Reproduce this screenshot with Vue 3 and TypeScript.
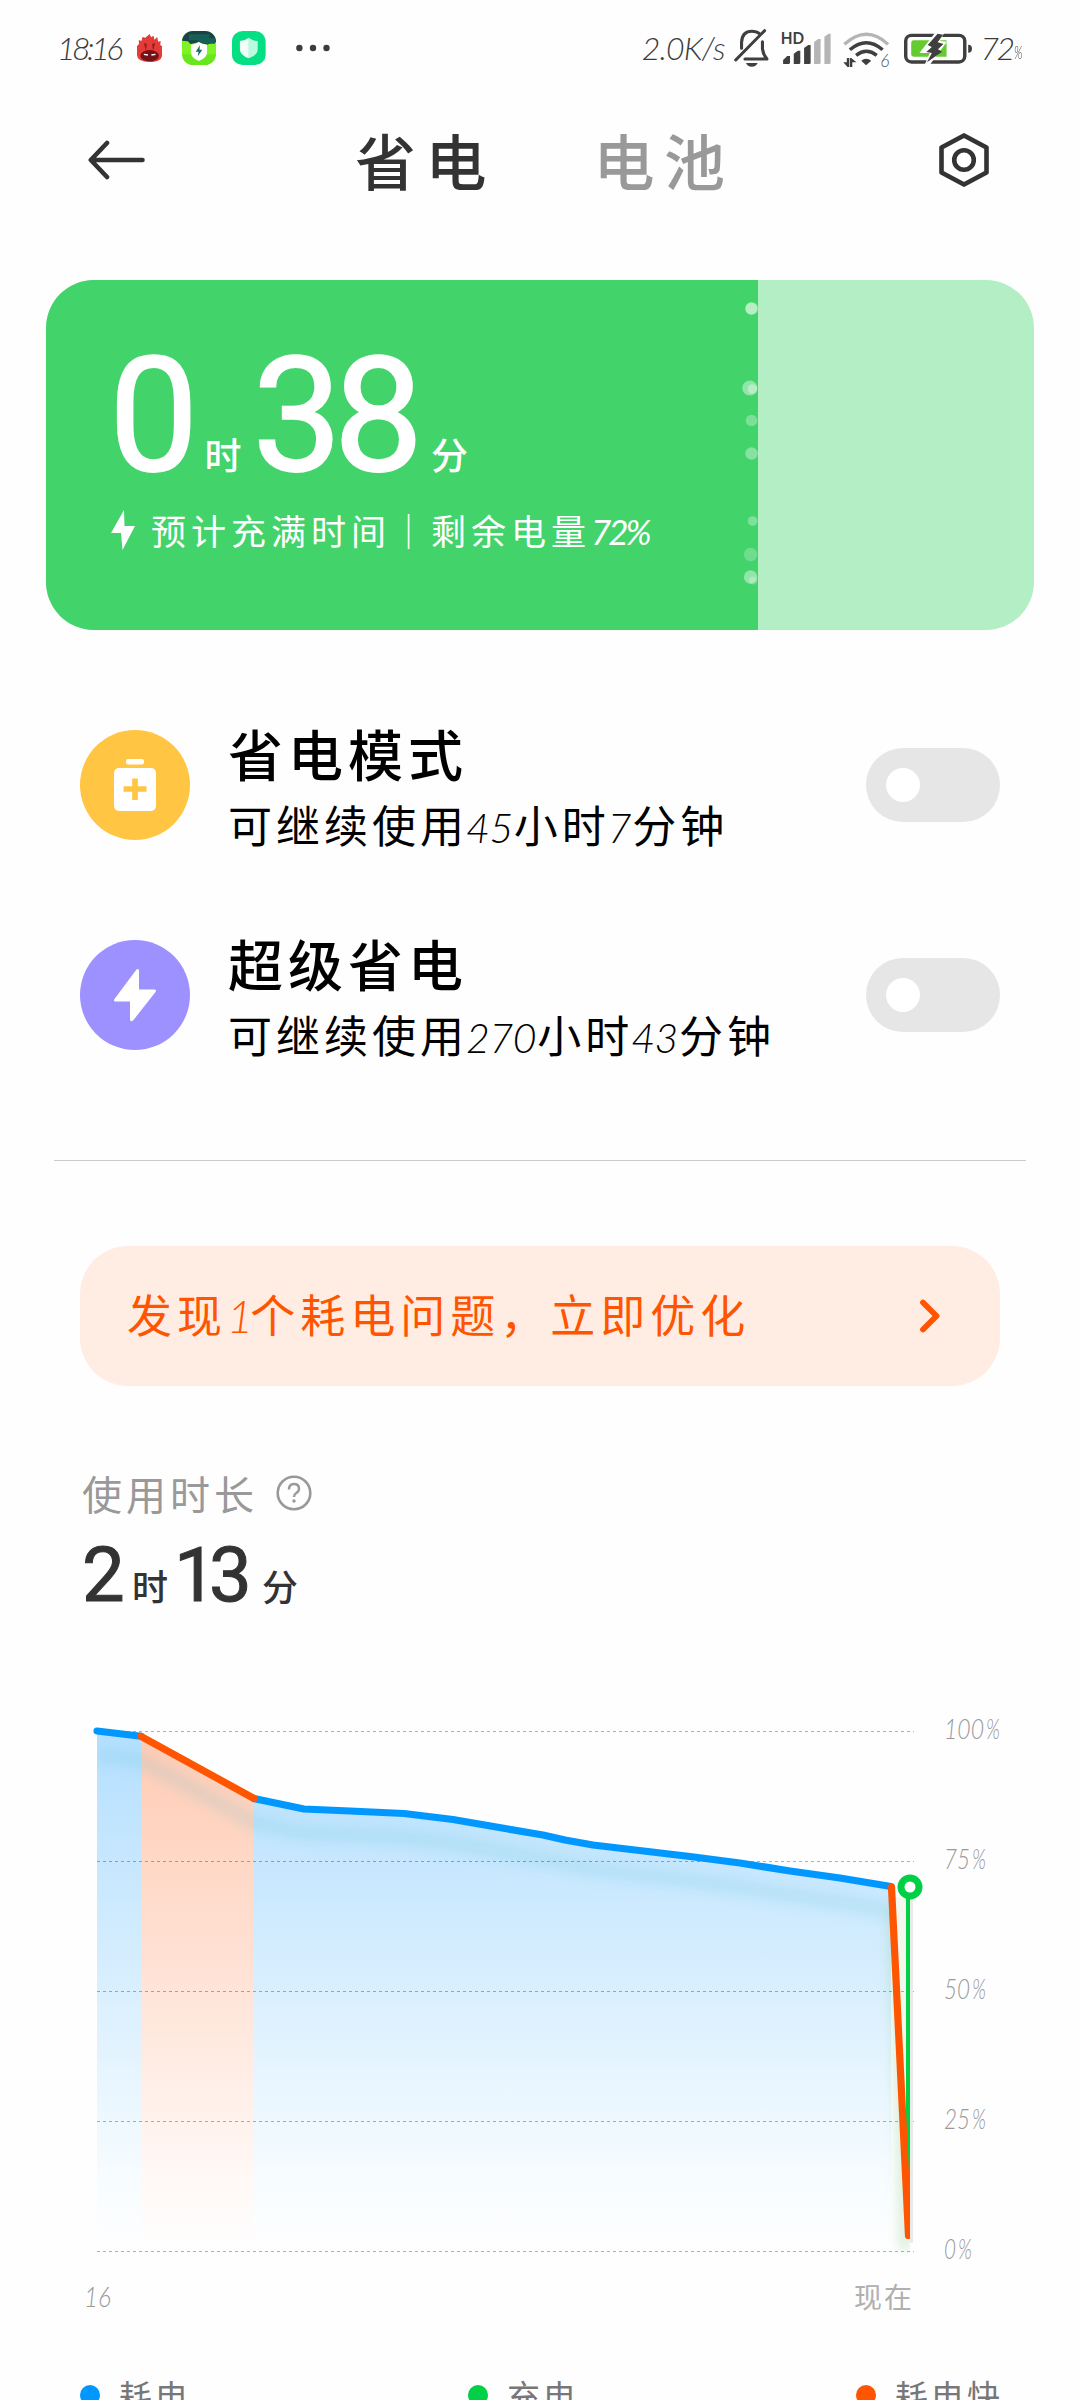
<script setup lang="ts">
interface Mode {
  id: string
  title: string
  hours: string
  minutes: string
  color: string
}

interface Point {
  x: number
  y: number
}

const modes: Mode[] = [
  { id: 'saver', title: '省电模式', hours: '45', minutes: '7', color: '#ffc543' },
  { id: 'ultra', title: '超级省电', hours: '270', minutes: '43', color: '#9d91ff' },
]

const bubbles = [
  { x: 751.5, y: 308.5, r: 6.2, o: 0.62 },
  { x: 749.8, y: 388, r: 7.6, o: 0.42 },
  { x: 752.5, y: 389, r: 4.8, o: 0.35 },
  { x: 751.5, y: 420.5, r: 5.8, o: 0.3 },
  { x: 751.5, y: 453.5, r: 6.2, o: 0.36 },
  { x: 752.6, y: 521, r: 4.8, o: 0.32 },
  { x: 750.6, y: 554.5, r: 6.7, o: 0.24 },
  { x: 750.6, y: 577, r: 6.7, o: 0.42 },
  { x: 753, y: 580.5, r: 4, o: 0.25 },
]

const gridLines = [
  { y: 1731.5, label: '100' },
  { y: 1861.5, label: '75' },
  { y: 1991.5, label: '50' },
  { y: 2121.5, label: '25' },
  { y: 2251.5, label: '0' },
]

const toPoints = (pairs: number[][]): Point[] => pairs.map(([x, y]) => ({ x, y }))
const line = (pts: Point[]): string => pts.map((p) => `${p.x},${p.y}`).join(' ')
const area = (pts: Point[]): string =>
  `${pts[0].x},2251 ${line(pts)} ${pts[pts.length - 1].x},2251`

const first = toPoints([[97, 1731], [141, 1736.3]])
const fast = toPoints([[141, 1736.3], [254, 1798.5]])
const rest = toPoints([
  [254, 1798.5], [304, 1809], [350, 1811], [404, 1813.5], [453, 1819.5], [508, 1829],
  [543, 1835], [565, 1840], [593, 1845], [690, 1856.5], [740, 1863], [790, 1871],
  [840, 1878], [891, 1886.5],
])
const drop = toPoints([[891.5, 1887], [908.5, 2235.5]])
const all = [...first, ...fast, ...rest]

const legend = [
  { text: '耗电', color: '#0098ff' },
  { text: '充电', color: '#00d046' },
  { text: '耗电快', color: '#ff5500' },
]
</script>

<template>
  <main class="page">
    <div class="status">
      <span class="num clock">18:16</span>
      <svg class="antutu" width="25" height="28" viewBox="397 107 73 84" preserveAspectRatio="none">
        <path d="M434 107l4 10 7-5 3 12 8-8 3 14 7-2-1 12 5 4v26q0 21-36 21t-37-21v-27l6-6-1-12 8 3 3-12 8 2z" fill="#e23b38" />
        <path d="M417 134l9 3-3 20zM450 134l-9 3 3 20z" fill="#9d1a1c" />
        <ellipse cx="434" cy="172" rx="27" ry="17" fill="#741217" />
        <path d="M417 168l12 2M439 170l12-2" stroke="#fff" stroke-width="4" />
      </svg>
      <svg class="app-a" width="34" height="34" viewBox="528 96 99 102" preserveAspectRatio="none">
        <defs><clipPath id="cap"><rect x="528" y="96" width="99" height="102" rx="32" /></clipPath></defs>
        <g clip-path="url(#cap)">
          <rect x="528" y="96" width="99" height="102" fill="#69e61c" />
          <path d="M528 126h99v40h-99z" fill="#7df224" />
          <path d="M528 96h99v34l-14 2-12 5-23-8-25 6-8-8-17-2z" fill="#1b4247" />
          <path d="M548 106h60v12h16v16h-42l-10-10h-24z" fill="#176058" />
        </g>
        <path d="M577 129q12 8 24 8v22q0 18-24 27q-23-9-23-27v-22q13 0 23-8z" fill="#fff" />
        <path d="M580 139l-12 19h8l-2 14 13-20h-8z" fill="#176b67" />
      </svg>
      <svg class="app-b" width="34" height="34" viewBox="674 96 99 102" preserveAspectRatio="none">
        <rect x="674" y="96" width="98" height="102" rx="31" fill="#04df84" />
        <path d="M723 116q12 10 26 10v24q0 19-26 28z" fill="#b9fbe0" />
        <path d="M723 116q-12 10-26 10v24q0 19 26 28z" fill="#f2fff9" />
      </svg>
      <svg class="dots" width="34" height="8" viewBox="0 0 34 8">
        <circle v-for="cx in [3.4, 17, 30.5]" :key="cx" :cx="cx" cy="4" r="3.2" fill="#3c3c3c" />
      </svg>
      <span class="num speed">2.0K/s</span>
      <svg class="bell" width="36" height="38" viewBox="565 92 105 114" preserveAspectRatio="none">
        <g fill="none" stroke="#3f3f3f" stroke-linecap="round" stroke-linejoin="round">
          <path d="M587 150v-18q2-33 30-33q14 0 22 7" stroke-width="9" />
          <path d="M648 130v22q2 16 13 30h-64" stroke-width="9" />
          <path d="M570 185l84-88" stroke-width="9" />
        </g>
        <path d="M600 194h34q-4 11-17 11t-17-11z" fill="#3f3f3f" />
      </svg>
      <svg class="signal" width="50.6" height="34" viewBox="698 96 147 102" preserveAspectRatio="none">
        <text class="hd" x="700" y="135" textLength="68" lengthAdjust="spacingAndGlyphs">HD</text>
        <g fill="#3f3f3f">
          <path d="M707 195v-12l12-12h8v20q0 4-4 4z" />
          <path d="M738 195v-31l12-9h7v36q0 4-4 4z" />
          <path d="M768 195v-48l12-9h7v53q0 4-4 4z" />
        </g>
        <g fill="#b5b5b5">
          <path d="M797 195v-66l12-9h7v71q0 4-4 4z" />
          <path d="M827 195v-82l12-9h6v87q0 4-4 4z" />
        </g>
      </svg>
      <svg class="wifi" width="47.5" height="37" viewBox="882 94 138 111" preserveAspectRatio="none">
        <g fill="none" stroke-width="10">
          <path d="M886 134q64-60 127 0" stroke="#b5b5b5" />
          <path d="M902 150q48-42 95 0" stroke="#3f3f3f" />
          <path d="M920 167q30-24 60 0" stroke="#3f3f3f" />
        </g>
        <path d="M949 197l-14-14q14-12 29 0z" fill="#3f3f3f" />
        <g fill="#3f3f3f">
          <path d="M893 175h7v27h-5l-12-14h10zM909 202h-7v-27h4l15 13h-12z" />
        </g>
        <text class="six" x="990" y="201">6</text>
      </svg>
      <svg class="battery" width="69" height="33" viewBox="1059 97 201 99" preserveAspectRatio="none">
        <rect x="1064" y="107" width="172" height="80" rx="17" fill="#fff" stroke="#3f3f3f" stroke-width="10" />
        <path d="M1087 122h96v49h-96q-7 0-7-7v-35q0-7 7-7z" fill="#64cb30" />
        <path d="M1152 96l25 2-13 26 20 2-52 72-14 0 16-38h-30z" fill="#fff" />
        <path d="M1157 102l16 3-16 23 17 5-16 16 12 7-44 32 14-28-16-3 16-15-12-6z" fill="#3f3f3f" />
        <path d="M1246 135q11 0 11 12t-11 12z" fill="#3f3f3f" />
      </svg>
      <span class="num level">72</span><span class="num pct-s">%</span>
    </div>

    <header class="bar">
      <svg class="back" width="57" height="40" viewBox="0 0 57 40">
        <path d="M19 3L2.800 20 19 37M3 20h51.500" fill="none" stroke="#333" stroke-width="4.600" stroke-linecap="round" stroke-linejoin="round" />
      </svg>
      <span class="tab tab-on">省电</span>
      <span class="tab tab-off">电池</span>
      <svg class="gear" width="50" height="54" viewBox="0 0 50 54">
        <path d="M25 2.400L47.500 14.600v24.800L25 51.600 2.500 39.400V14.600z" fill="none" stroke="#333" stroke-width="4.600" stroke-linejoin="round" />
        <circle cx="25" cy="27" r="9.800" fill="none" stroke="#333" stroke-width="4.600" />
      </svg>
    </header>

    <section class="card">
      <div class="fill"></div>
      <svg class="bubbles" width="988" height="350" viewBox="46 280 988 350">
        <circle v-for="(b, i) in bubbles" :key="i" :cx="b.x" :cy="b.y" :r="b.r" fill="#fff" :fill-opacity="b.o" />
      </svg>
      <div class="card-body">
        <div class="time big">
          <span class="d">0</span><span class="u u1">时</span><span class="d d2">38</span><span class="u u2">分</span>
        </div>
        <div class="card-note">
          <svg class="bolt" width="25" height="40" viewBox="0 0 25 40">
            <path d="M13 0L0 23h10l1.500 17L24 16H13.500z" fill="#fff" />
          </svg>
          <span>预计充满时间｜剩余电量<span class="num">72%</span></span>
        </div>
      </div>
    </section>

    <section class="modes">
      <div v-for="m in modes" :key="m.id" class="mode">
        <span class="disc" :style="{ background: m.color }">
          <svg v-if="m.id === 'saver'" width="42" height="52" viewBox="0 0 42 52">
            <rect x="12" y="0" width="18" height="5.400" rx="2" fill="#fff" />
            <rect x="0" y="9" width="42" height="43" rx="5" fill="#fff" />
            <path d="M21 19.500v21.500M9.500 30h23" stroke="#ffc543" stroke-width="5.600" />
          </svg>
          <svg v-else width="44" height="54" viewBox="0 0 44 54">
            <path d="M23.500 1.500Q26 0 26 3v18.500h15q3 0 1.500 2.500L20.500 52Q17 55 17 51V33.500H2.500Q0 33.500 1.500 31z" fill="#fff" />
          </svg>
        </span>
        <div class="mode-text">
          <div class="mode-title">{{ m.title }}</div>
          <div class="mode-sub">可继续使用<span class="num">{{ m.hours }}</span>小时<span class="num">{{ m.minutes }}</span>分钟</div>
        </div>
        <span class="toggle"><i></i></span>
      </div>
    </section>

    <hr class="rule" />

    <section class="banner">
      <span>发现<span class="num">1</span>个耗电问题，立即优化</span>
      <svg width="20" height="34" viewBox="0 0 20 34">
        <path d="M3 3.500L16.500 17 3 30.500" fill="none" stroke="#ff5500" stroke-width="5.800" stroke-linecap="round" stroke-linejoin="round" />
      </svg>
    </section>

    <section class="usage">
      <div class="usage-label">
        <span>使用时长</span>
        <svg width="36" height="36" viewBox="0 0 36 36">
          <circle cx="18" cy="18" r="16.300" fill="none" stroke="#999" stroke-width="2.600" />
          <path d="M13 14.500q0-5.500 5-5.500t5 4.700q0 2.600-2.700 4.300-2.300 1.500-2.300 4" fill="none" stroke="#999" stroke-width="2.400" />
          <circle cx="18" cy="26" r="1.700" fill="#999" />
        </svg>
      </div>
      <div class="time small">
        <span class="d">2</span><span class="u u1">时</span><span class="d d2">13</span><span class="u u2">分</span>
      </div>
    </section>

    <svg class="chart" width="1080" height="640" viewBox="0 1690 1080 640">
      <defs>
        <linearGradient id="blue" gradientUnits="userSpaceOnUse" x1="0" y1="1731" x2="0" y2="2245">
          <stop offset="0" stop-color="#b4dffe" />
          <stop offset="0.500" stop-color="#d9effe" />
          <stop offset="0.900" stop-color="#f9fdff" />
          <stop offset="1" stop-color="#fefefe" />
        </linearGradient>
        <linearGradient id="orange" gradientUnits="userSpaceOnUse" x1="0" y1="1731" x2="0" y2="2245">
          <stop offset="0" stop-color="#ffcbb4" />
          <stop offset="0.500" stop-color="#ffe4d8" />
          <stop offset="0.900" stop-color="#fffaf8" />
          <stop offset="1" stop-color="#fefefe" />
        </linearGradient>
        <filter id="soft" x="-10%" y="-30%" width="120%" height="160%"><feGaussianBlur stdDeviation="6" /></filter>
        <filter id="softv" filterUnits="userSpaceOnUse" x="860" y="1870" width="60" height="420"><feGaussianBlur stdDeviation="5" /></filter>
        <clipPath id="plot"><rect x="90" y="1700" width="820" height="590" /></clipPath>
        <clipPath id="under"><polygon :points="area(all)" /></clipPath>
      </defs>
      <polygon :points="area(first)" fill="url(#blue)" />
      <polygon :points="area(fast)" fill="url(#orange)" />
      <polygon :points="area(rest)" fill="url(#blue)" />
      <g clip-path="url(#under)">
        <polyline :points="line(all)" transform="translate(0 24)" fill="none" stroke="#46b4c8" stroke-opacity="0.150" stroke-width="15" filter="url(#soft)" />
      </g>
      <g clip-path="url(#plot)">
        <path d="M893 1905L905 2250" fill="none" stroke="#7cc98a" stroke-opacity="0.240" stroke-width="14" filter="url(#softv)" />
        <path d="M891 1895L908 2235V1900z" fill="#f3f7ec" />
      </g>
      <rect x="910" y="1898" width="3" height="345" fill="#e9ebe9" />
      <g v-for="g in gridLines" :key="g.label">
        <line x1="97" x2="914" :y1="g.y" :y2="g.y" stroke="#000" stroke-opacity="0.310" stroke-width="1" stroke-dasharray="3 3" />
        <text class="axis" x="944" :y="g.y + 7.500" :textLength="g.label.length * 14 - 2" lengthAdjust="spacingAndGlyphs">{{ g.label }}</text>
        <text class="axis" :x="944 + g.label.length * 14" :y="g.y + 7.500" textLength="14" lengthAdjust="spacingAndGlyphs">%</text>
      </g>
      <polyline :points="line(first)" class="curve" stroke="#0098ff" />
      <polyline :points="line(rest)" class="curve" stroke="#0098ff" />
      <polyline :points="line(fast)" class="curve" stroke="#ff5500" />
      <g clip-path="url(#plot)">
        <path d="M908 1890V2190" stroke="#00d046" stroke-width="4" />
        <polyline :points="line(drop)" class="curve" stroke="#ff5500" />
      </g>
      <circle cx="910" cy="1887" r="9" fill="#fff" stroke="#00d046" stroke-width="7" />
      <text class="axis" x="84" y="2307" textLength="27" lengthAdjust="spacingAndGlyphs">16</text>
      <text class="now" x="854" y="2308">现在</text>
    </svg>

    <footer class="legend">
      <span v-for="l in legend" :key="l.text" class="key">
        <i :style="{ background: l.color }"></i>{{ l.text }}
      </span>
    </footer>
  </main>
</template>

<style>
body {
  margin: 0;
  background: #fefefe;
}
</style>

<style scoped>
.page {
  width: 1080px;
  height: 2400px;
  overflow: hidden;
  background: #fefefe;
  font-family: 'Noto Sans CJK SC', sans-serif;
  color: #333;
}
svg {
  display: block;
  flex: none;
}
.num {
  font-family: Lato, 'Liberation Sans', sans-serif;
  font-weight: 300;
  font-style: italic;
  line-height: 0;
}

.status {
  display: flex;
  align-items: center;
  height: 96px;
  padding-left: 57px;
  white-space: nowrap;
}
.status svg { overflow: visible; }
.status .num {
  flex: none;
  font-size: 32px;
  line-height: 40px;
  color: #3c3c3c;
}
.status .clock { width: 79.7px; letter-spacing: -3.5px; }
.app-a { margin-left: 20px; }
.app-b { margin-left: 16px; }
.dots { margin-left: 30px; }
.status .speed { width: 92px; margin-left: 312px; letter-spacing: -0.8px; }
.bell { margin-left: 0.6px; }
.signal { margin-left: 10px; }
.hd { font: 700 49px Lato, sans-serif; fill: #3f3f3f; }
.wifi { margin-left: 12.5px; margin-top: 3px; }
.six { font: italic 300 50px Lato, sans-serif; fill: #555; }
.battery { margin-left: 13.5px; }
.status .level { width: 34px; margin-left: 7px; letter-spacing: -2.5px; }
.status .pct-s { font-size: 18px; margin-top: 7px; transform: scaleX(0.65); transform-origin: 0 50%; }

.bar {
  display: flex;
  align-items: center;
  height: 128px;
  padding-left: 88px;
}
.tab {
  flex: none;
  width: 141px;
  text-indent: 4px;
  font-size: 61px;
  letter-spacing: 9.5px;
  line-height: 122px;
  font-weight: 500;
  white-space: nowrap;
}
.tab-on { margin-left: 206px; }
.tab-off { margin-left: 97.5px; color: #999; }
.gear { margin-left: 208.5px; }

.card {
  position: relative;
  height: 350px;
  margin: 56px 46px 0;
  border-radius: 48px;
  overflow: hidden;
  background: #b3eec5;
  color: #fff;
}
.fill {
  position: absolute;
  inset: 0 auto 0 0;
  width: 711.5px;
  background: #42d36a;
}
.bubbles {
  position: absolute;
  inset: 0;
}
.card-body {
  position: relative;
  padding: 62px 0 0 65px;
}
.time {
  display: flex;
  align-items: baseline;
  white-space: nowrap;
}
.d {
  font-family: Roboto, sans-serif;
  font-weight: 400;
}
.u {
  font-weight: 500;
}
.big { height: 148px; line-height: 148px; }
.big .d { font-size: 159px; letter-spacing: -8px; margin-left: -2px; -webkit-text-stroke: 2px #fff; }
.big .u { font-size: 37px; }
.big .u1 { margin-left: 14px; }
.big .d.d2 { margin-left: 11px; }
.big .u2 { margin-left: 16px; }
.card-note {
  display: flex;
  align-items: center;
  height: 44px;
  margin-top: 18px;
  font-size: 35px;
  letter-spacing: 5px;
  line-height: 44px;
  white-space: nowrap;
}
.card-note .bolt { margin-right: 15px; }
.card-note .num { font-size: 35px; letter-spacing: -3px; font-weight: 400; }

.modes {
  display: flex;
  flex-direction: column;
  gap: 100px;
  margin: 100px 80px 0;
}
.mode {
  display: flex;
  align-items: center;
  height: 110px;
}
.disc {
  display: flex;
  align-items: center;
  justify-content: center;
  flex: none;
  width: 110px;
  height: 110px;
  border-radius: 50%;
}
.mode-text {
  flex: 1;
  margin-left: 38px;
  color: #000;
  white-space: nowrap;
}
.mode-title {
  height: 71px;
  margin-top: 2px;
  font-size: 55px;
  letter-spacing: 5px;
  line-height: 58px;
  font-weight: 500;
}
.mode-sub {
  height: 56px;
  font-size: 44px;
  letter-spacing: 4px;
  line-height: 60px;
}
.mode-sub .num {
  margin-left: -2px;
  margin-right: 1px;
  font-size: 41px;
  letter-spacing: -0.4px;
}
.toggle {
  display: flex;
  align-items: center;
  flex: none;
  box-sizing: border-box;
  width: 134px;
  height: 74px;
  padding-left: 20px;
  border-radius: 37px;
  background: #e6e6e6;
}
.toggle i {
  width: 34px;
  height: 34px;
  border-radius: 50%;
  background: #fff;
}

.rule {
  height: 1px;
  margin: 110px 54px 0;
  border: 0;
  background: #ccc;
}

.banner {
  display: flex;
  align-items: center;
  justify-content: space-between;
  box-sizing: border-box;
  height: 140px;
  margin: 85px 80px 0;
  padding: 0 60px 6px 47px;
  border-radius: 48px;
  background: #ffede4;
  color: #ff5500;
  font-size: 45px;
  letter-spacing: 5px;
  white-space: nowrap;
}
.banner svg { margin-top: 5px; }
.banner .num { letter-spacing: -3px; }

.usage { margin: 83px 80px 0; }
.usage-label {
  display: flex;
  align-items: center;
  height: 48px;
  padding-left: 2px;
  color: #999;
  font-size: 40px;
  letter-spacing: 4px;
  line-height: 44px;
}
.usage-label svg { margin-left: 18px; }
.small { height: 76px; margin-top: 20px; line-height: 76px; }
.small .d { font-size: 76px; letter-spacing: -7.700px; margin-left: 2px; -webkit-text-stroke: 1px #333; }
.small .u { font-size: 36px; }
.small .u1 { margin-left: 15px; }
.small .d.d2 { margin-left: 6px; }
.small .u2 { margin-left: 18px; }

.chart { margin-top: 77px; }
.curve {
  fill: none;
  stroke-width: 7.2px;
  stroke-linecap: round;
  stroke-linejoin: round;
}
.axis { font: italic 300 27px Lato, sans-serif; fill: #999; }
.now { font: 400 28px 'Noto Sans CJK SC', sans-serif; fill: #b0b0b0; letter-spacing: 2px; }

.legend {
  display: flex;
  height: 50px;
  margin: 40px 0 0 80px;
  color: #777;
  font-size: 33px;
  letter-spacing: 3px;
  line-height: 50px;
  white-space: nowrap;
}
.key {
  display: flex;
  align-items: center;
  width: 388px;
  flex: none;
}
.key i {
  width: 20px;
  height: 20px;
  margin-right: 19px;
  border-radius: 50%;
}
</style>
